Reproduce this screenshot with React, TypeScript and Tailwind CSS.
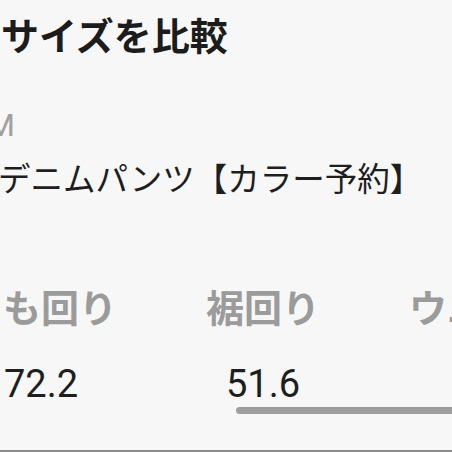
import React from "react";

const cols = [
  { label: "もも回り", value: "72.2" },
  { label: "裾回り", value: "51.6" },
  { label: "ウエスト", value: "" },
];

export default function App() {
  return (
    <div
      className="w-[452px] h-[452px] overflow-hidden bg-[#f7f7f7] relative"
      style={{ fontFamily: '"Roboto", "Noto Sans CJK JP", sans-serif' }}
    >
      <div className="pt-[12px] pl-[1px] text-[38px] leading-[50px] font-bold text-[#1c1c1c] whitespace-nowrap">
        サイズを比較
      </div>
      <div className="mt-[45px] ml-[-13px] text-[32px] leading-[36px] text-[#a0a0a0] whitespace-nowrap">
        M
      </div>
      <div className="mt-[15px] ml-[-2px] text-[32.5px] leading-[44px] text-[#1e1e1e] whitespace-nowrap">
        デニムパンツ【カラー予約】
      </div>
      <div className="mt-[83px] ml-[-70px] flex">
        {cols.map((c) => (
          <div key={c.label} className="w-[222px] shrink-0 flex flex-col items-center">
            <div className="text-[38px] leading-[48px] font-bold text-[#9b9b9b] whitespace-nowrap">
              {c.label}
            </div>
            <div className="mt-[29px] h-[44px] text-[38px] leading-[44px] text-[#1e1e1e] whitespace-nowrap">
              {c.value}
            </div>
          </div>
        ))}
      </div>
      <div className="absolute left-[236px] top-[407px] w-[240px] h-[7px] rounded-full bg-[#9e9e9e]" />
      <div className="absolute left-0 bottom-0 w-full h-[2px] bg-[#8a8a8a]" />
    </div>
  );
}
